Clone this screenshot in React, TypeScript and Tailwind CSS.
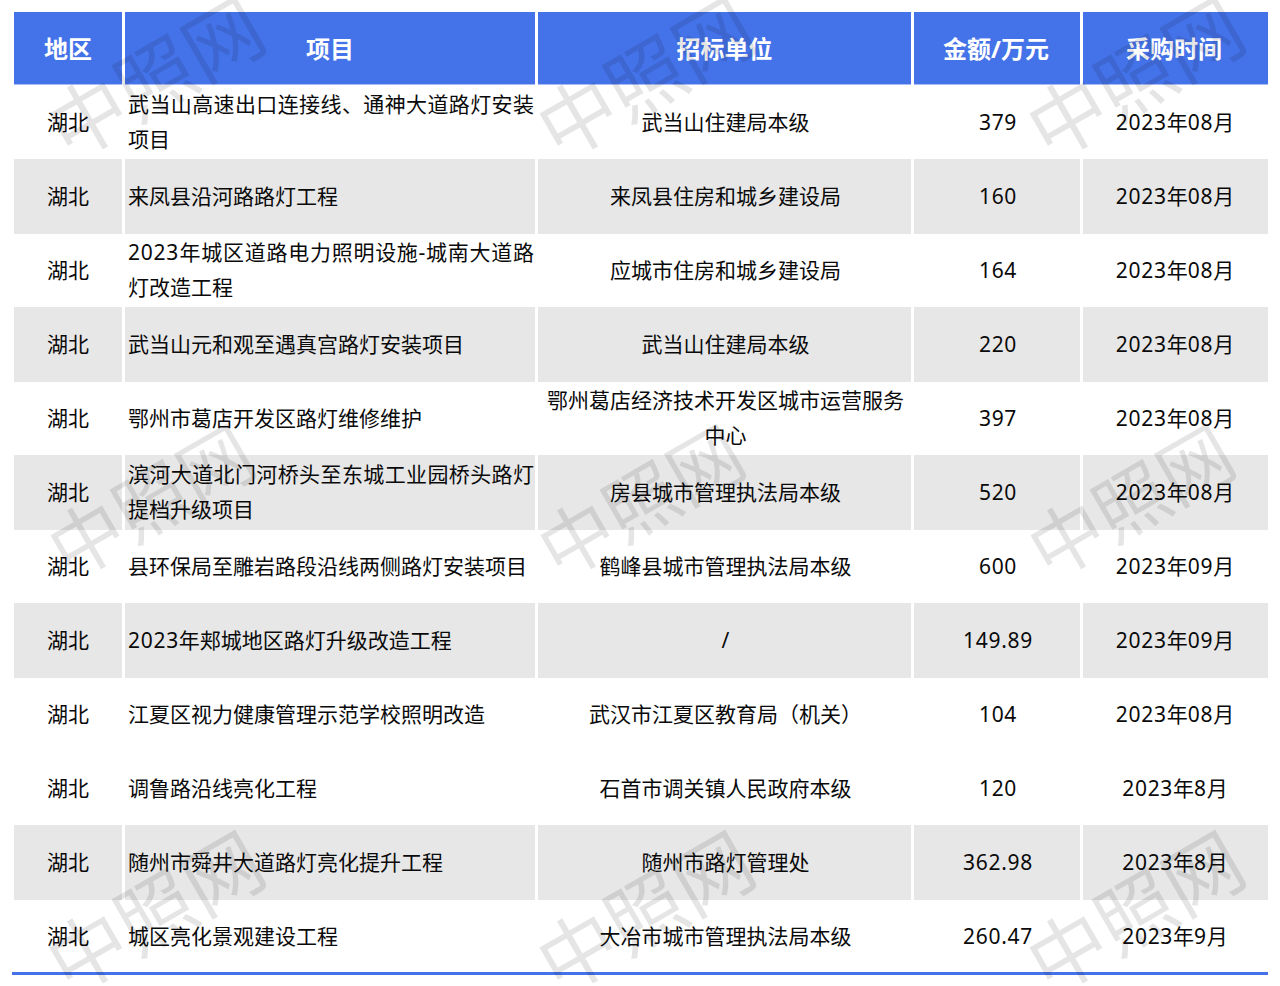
import React from 'react';

const rows = [
    { project: '武当山高速出口连接线、通神大道路灯安装项目', unit: '武当山住建局本级', amount: '379', date: '2023年08月' },
    { project: '来凤县沿河路路灯工程', unit: '来凤县住房和城乡建设局', amount: '160', date: '2023年08月', gray: true },
    { project: '2023年城区道路电力照明设施-城南大道路灯改造工程', unit: '应城市住房和城乡建设局', amount: '164', date: '2023年08月' },
    { project: '武当山元和观至遇真宫路灯安装项目', unit: '武当山住建局本级', amount: '220', date: '2023年08月', gray: true },
    { project: '鄂州市葛店开发区路灯维修维护', unit: '鄂州葛店经济技术开发区城市运营服务中心', amount: '397', date: '2023年08月' },
    { project: '滨河大道北门河桥头至东城工业园桥头路灯提档升级项目', unit: '房县城市管理执法局本级', amount: '520', date: '2023年08月', gray: true },
    { project: '县环保局至雕岩路段沿线两侧路灯安装项目', unit: '鹤峰县城市管理执法局本级', amount: '600', date: '2023年09月' },
    { project: '2023年郏城地区路灯升级改造工程', unit: '/', amount: '149.89', date: '2023年09月', gray: true },
    { project: '江夏区视力健康管理示范学校照明改造', unit: '武汉市江夏区教育局（机关）', amount: '104', date: '2023年08月' },
    { project: '调鲁路沿线亮化工程', unit: '石首市调关镇人民政府本级', amount: '120', date: '2023年8月' },
    { project: '随州市舜井大道路灯亮化提升工程', unit: '随州市路灯管理处', amount: '362.98', date: '2023年8月', gray: true },
    { project: '城区亮化景观建设工程', unit: '大冶市城市管理执法局本级', amount: '260.47', date: '2023年9月' },
];

const marks = [
    'left-[36px] top-[24px] text-[78px]', 'left-[526px] top-[24px] text-[78px]', 'left-[1016px] top-[24px] text-[78px]',
    'left-[38px] top-[448px] text-[74px]', 'left-[528px] top-[448px] text-[74px]', 'left-[1018px] top-[448px] text-[74px]',
    'left-[36px] top-[858px] text-[78px]', 'left-[526px] top-[858px] text-[78px]', 'left-[1016px] top-[858px] text-[78px]',
];

const grid = 'grid grid-cols-[108px_410px_373px_166px_185px] gap-x-[3px] ml-[14px] w-[1254px]';

// digits run a little wider in the reference
function Txt({ text }: { text: string }) {
    return (
        <>
            {text.split(/([\d.]+)/).map((part, i) =>
                i % 2 ? <span key={i} className="tracking-[0.7px]">{part}</span> : part,
            )}
        </>
    );
}

function HeadCell({ className, children }: { className?: string; children: React.ReactNode }) {
    return (
        <div className={`flex items-center justify-center border-b border-[#a8bdf3] bg-[#4472e8] text-[24px] font-bold text-white ${className ?? ''}`}>
            {children}
        </div>
    );
}

function Cell({ gray, pad, text }: { gray?: boolean; pad: string; text: string }) {
    return (
        <div className={`flex items-center justify-center text-center ${pad} ${gray ? '-mb-px bg-[#e7e7e7] pb-px' : ''}`}>
            <div>
                <Txt text={text} />
            </div>
        </div>
    );
}

export default function App() {
    return (
        <div className="relative h-[986px] w-[1280px] overflow-hidden bg-white pt-[12px] font-['Noto_Sans','Noto_Sans_CJK_SC',sans-serif] text-[21px] leading-[35px] text-[#0a0a0a]">
            <div className={`${grid} h-[73px]`}>
                <HeadCell>地区</HeadCell>
                <HeadCell>项目</HeadCell>
                <HeadCell>招标单位</HeadCell>
                <HeadCell className="pr-[2px]">金额/万元</HeadCell>
                <HeadCell className="pr-[3px]">采购时间</HeadCell>
            </div>
            {rows.map((r, i) => (
                <div key={i} className={`${grid} h-[74px]`}>
                    <Cell gray={r.gray} pad="px-[6px]" text="湖北" />
                    <div className={`flex items-center pl-[3px] pr-px ${r.gray ? '-mb-px bg-[#e7e7e7] pb-px' : ''}`}>
                        <div className="w-full text-justify">
                            <Txt text={r.project} />
                        </div>
                    </div>
                    <Cell gray={r.gray} pad="pl-[7px] pr-[5px]" text={r.unit} />
                    <Cell gray={r.gray} pad="pl-[7px] pr-[5px]" text={r.amount} />
                    <Cell gray={r.gray} pad="pr-[1px]" text={r.date} />
                </div>
            ))}
            <div className="-mt-px ml-[12px] h-[3px] w-[1256px] bg-[#4472e8]" />
            {marks.map((m) => (
                <div
                    key={m}
                    className={`pointer-events-none absolute ${m} origin-center -rotate-[30deg] whitespace-nowrap font-['Noto_Sans_CJK_SC',sans-serif] leading-[100px] text-black/10`}
                >
                    中照网
                </div>
            ))}
        </div>
    );
}
